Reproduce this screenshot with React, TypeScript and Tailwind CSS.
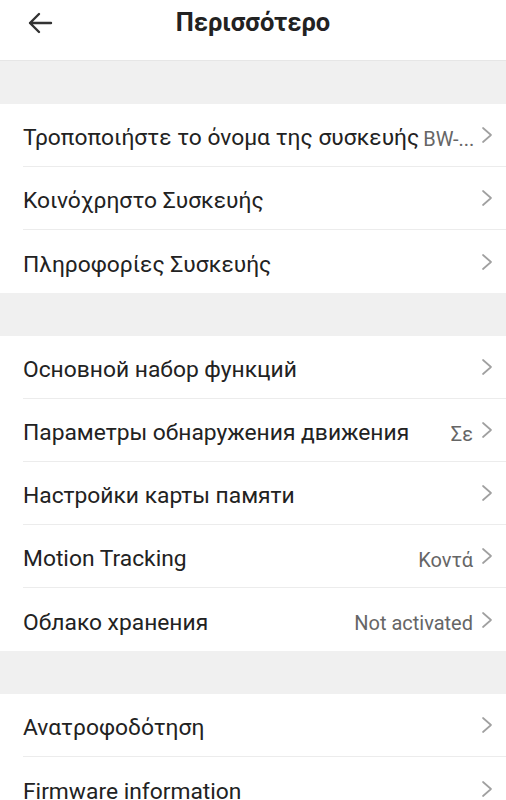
type Item = { label: string; value?: string };

const groups: Item[][] = [
  [
    { label: "Τροποποιήστε το όνομα της συσκευής", value: "BW-..." },
    { label: "Κοινόχρηστο Συσκευής" },
    { label: "Πληροφορίες Συσκευής" },
  ],
  [
    { label: "Основной набор функций" },
    { label: "Параметры обнаружения движения", value: "Σε" },
    { label: "Настройки карты памяти" },
    { label: "Motion Tracking", value: "Κοντά" },
    { label: "Облако хранения", value: "Not activated" },
  ],
  [{ label: "Ανατροφοδότηση" }, { label: "Firmware information" }],
];

function Chevron() {
  return (
    <svg
      width="12"
      height="18"
      viewBox="0 0 12 18"
      fill="none"
      stroke="#a0a0a0"
      strokeWidth="1.7"
      strokeLinecap="round"
      strokeLinejoin="round"
      className="shrink-0 ml-[8px]"
    >
      <path d="M2 2l8 7-8 7" />
    </svg>
  );
}

function Row({ item, last }: { item: Item; last: boolean }) {
  return (
    <div className="pl-[23px] bg-white">
      <div
        className={
          "h-[63px] flex items-center pr-[13px] " +
          (last ? "" : "border-b border-[#ececec]")
        }
      >
        <span className="text-[22.8px] text-[#222] whitespace-nowrap shrink-0 pt-[7px]">
          {item.label}
        </span>
        <span className="flex-1 min-w-0 text-right text-[20px] text-[#666] whitespace-nowrap ml-1 pt-[7px]">
          {item.value}
        </span>
        <Chevron />
      </div>
    </div>
  );
}

export default function App() {
  return (
    <div
      className="w-[506px] h-[800px] overflow-hidden bg-[#f0f0f0]"
      style={{ fontFamily: "Roboto, 'Noto Sans', sans-serif" }}
    >
      <header className="relative h-[61px] bg-white border-b border-[#e6e6e6] flex items-center justify-center">
        <svg
          className="absolute left-[27px] top-[11px]"
          width="26"
          height="24"
          viewBox="0 0 26 24"
          fill="none"
          stroke="#333"
          strokeWidth="2.4"
          strokeLinecap="round"
          strokeLinejoin="round"
        >
          <path d="M24 12H3M12 3l-9 9 9 9" />
        </svg>
        <h1 className="text-[25.5px] font-bold text-[#222] -mt-[16px]">Περισσότερο</h1>
      </header>
      {groups.map((g, gi) => (
        <div key={gi} className={gi === 0 ? "pt-[43px]" : "pt-[43px]"}>
          {g.map((item, i) => (
            <Row key={i} item={item} last={i === g.length - 1} />
          ))}
        </div>
      ))}
    </div>
  );
}
